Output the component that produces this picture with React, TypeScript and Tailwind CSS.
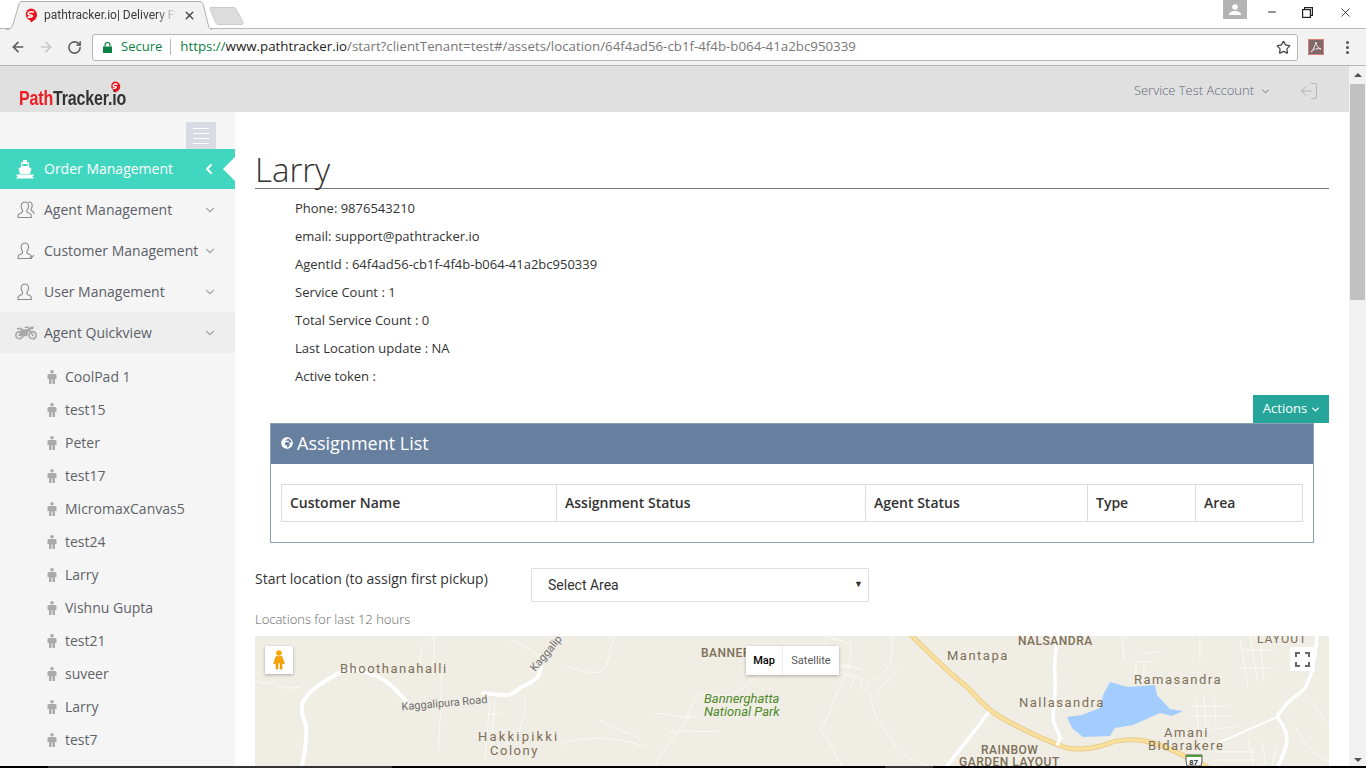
import { ChevronDown, ChevronLeft, ArrowLeft, ArrowRight, RotateCw, Star, X, Minus, LogOut } from "lucide-react";
import { FaMotorcycle, FaGlobeAfrica } from "react-icons/fa";

const agents = ["CoolPad 1", "test15", "Peter", "test17", "MicromaxCanvas5", "test24", "Larry", "Vishnu Gupta", "test21", "suveer", "Larry", "test7"];

const infoRows = [
  "Phone: 9876543210",
  "email: support@pathtracker.io",
  "AgentId : 64f4ad56-cb1f-4f4b-b064-41a2bc950339",
  "Service Count : 1",
  "Total Service Count : 0",
  "Last Location update : NA",
  "Active token :",
];

const columns = [
  { name: "Customer Name", width: "w-[274px]" },
  { name: "Assignment Status", width: "w-[309px]" },
  { name: "Agent Status", width: "w-[222px]" },
  { name: "Type", width: "w-[108px]" },
  { name: "Area", width: "w-[107px]" },
];

function LogoMark({ size }: { size: number }) {
  return (
    <svg width={size} height={size} viewBox="0 0 16 16">
      <path d="M8 0.5a7 7 0 0 1 5 11.8L8.5 15.5 7.5 13A6.5 6.5 0 0 1 8 .5z" fill="#e8141c" />
      <path d="M11.5 4.5C9 3.5 5 4 5.5 6.5 6 8 9.5 6.800 10 8.200 10.300 9.500 7.500 10 5 9.500" fill="none" stroke="#fff" strokeWidth="1.700" />
    </svg>
  );
}

function UserIcon({ variant }: { variant: "group" | "check" | "single" }) {
  return (
    <svg width="18" height="18" viewBox="0 0 18 18" fill="none" stroke="#8b8b8b" strokeWidth="1.100">
      <path d="M6 1.500c3-1.500 6 .5 5.500 4-.2 1.500-1 3-1.500 3.700-.3.800 0 2 1 2.500 1.500.6 2.500 1 3 1.800.3.600.3 2 .3 3H1c0-1 0-2.500.5-3 .7-.8 2-1.200 3-1.800 1-.5 1.200-1.700 1-2.500C5 8.500 4.300 7 4.200 5.500 4 4 4.600 2.200 6 1.500z" />
      {variant === "group" && <path d="M11 1c3-.5 5 2 4 5-.3 1-1 2-1.200 2.800 0 .8 1 1.200 2 1.700 .8.400 1.200 1.200 1.200 2.500" />}
      {variant === "check" && <path d="M13 14.500l1.500 1.500 2.500-3" />}
    </svg>
  );
}

function PersonIcon() {
  return (
    <svg className="ml-[1px] mr-[8px] shrink-0" width="10" height="14" viewBox="0 0 10 14" fill="#aaaaaa">
      <circle cx="5" cy="1.800" r="1.800" />
      <path d="M2 4h6c1 0 1.500.6 1.500 1.500V9H8v5H5.500V9.500h-1V14H2V9H.5V5.500C.5 4.600 1 4 2 4z" />
    </svg>
  );
}

function MenuItem({ label, icon, shaded }: { label: string; icon: React.ReactNode; shaded?: boolean }) {
  return (
    <div className={`flex h-[41px] items-center pl-[17px] pr-[18px] ${shaded ? "bg-[#eeeeee]" : ""}`}>
      <span className="flex w-[27px] shrink-0">{icon}</span>
      <span className="whitespace-nowrap text-[14px] text-[#5b6068]">{label}</span>
      <ChevronDown className="ml-auto shrink-0 text-[#a4a7aa]" size={14} />
    </div>
  );
}

function Sidebar() {
  return (
    <aside className="w-[235px] shrink-0 bg-[#f5f5f5]">
      <div className="flex h-[37px] justify-end pr-[19px] pt-[10px]">
        <div className="flex h-[27px] w-[30px] flex-col items-center justify-center gap-[4px] bg-[#d8dce2]">
          <span className="h-px w-[16px] bg-white" />
          <span className="h-px w-[16px] bg-white" />
          <span className="h-px w-[16px] bg-white" />
          <span className="h-px w-[16px] bg-white" />
        </div>
      </div>
      <div className="relative flex h-[40px] items-center bg-[#40d6c0] pb-[1px] pl-[16px] pr-[18px] text-white">
        <svg className="mr-[10px] shrink-0" width="18" height="20" viewBox="0 0 18 20" fill="#fff">
          <path d="M7 1h4v2.500h2V8l2.500 1.500L14 15H4L2.500 9.500 5 8V3.500h2z" />
          <rect x="6.300" y="5" width="5.400" height="2" fill="#40d6c0" />
          <path d="M0.500 15.500h17V17h-1v1h1v1.500h-17V18h1v-1h-1z" />
        </svg>
        <span className="text-[14px]">Order Management</span>
        <ChevronLeft className="ml-auto" size={16} strokeWidth={3} />
        <span className="absolute right-0 top-[8px] h-0 w-0 border-y-[12px] border-r-[12px] border-y-transparent border-r-white" />
      </div>
      <MenuItem label="Agent Management" icon={<UserIcon variant="group" />} />
      <MenuItem label="Customer Management" icon={<UserIcon variant="check" />} />
      <MenuItem label="User Management" icon={<UserIcon variant="single" />} />
      <MenuItem label="Agent Quickview" icon={<FaMotorcycle className="-ml-[2px] text-[#a8a8a8]" size={22} />} shaded />
      <ul className="pt-[7px]">
        {agents.map((name, i) => (
          <li key={i} className="flex h-[33px] items-center pl-[46px] text-[14px] text-[#5f6369]">
            <PersonIcon />
            {name}
          </li>
        ))}
      </ul>
    </aside>
  );
}

function MapCanvas() {
  const label = "font-['Roboto',sans-serif] fill-[#7d6f58] text-[13px] tracking-[1.500px]";
  const caps = "font-['Roboto',sans-serif] fill-[#7d6f58] text-[12px] font-medium tracking-[.5px]";
  const roadName = "font-['Roboto',sans-serif] fill-[#6f6f6f] text-[11px]";
  const thin = { fill: "none", stroke: "#fbfaf6", strokeWidth: 1 };
  return (
    <div className="relative h-[130px] overflow-hidden bg-[#f0ede5]">
      <svg className="block" width="1074" height="130" viewBox="255 636 1074 130">
        <g {...thin}>
          <path d="M255 681c8 2 12 4 18 0 8 8 14 8 28 6" />
          <path d="M434 636c-5 6-14 8-14 26" />
          <path d="M434 636v30M441 670c2 30-3 60-2 80" />
          <path d="M510 640c15 6 26 12 32 20M615 637c-8 15-5 30-13 34-8 4-20 0-38-5" />
          <path d="M524 695c4 15-4 30-8 50M490 700l-5 60M495 700l-4 45M488 714h12" />
          <path d="M560 745c20-10 60-8 85 2M600 720c20 14 30 10 40 20" />
          <path d="M654 768c8-18 22-30 32-48 5-12 8-22 14-26 14-2 30 8 45-8 6-6 14-6 16-14" />
          <path d="M652 715c14-6 30 8 46 0M668 733c14-4 32 0 52-2" />
          <path d="M850 672c-8 0-22 50-30 58 10 12 16 26 22 36" />
          <path d="M826 636l25 8-2 24-24-6zM838 672l22 6M842 664l20 6M855 676l-4 12M863 678l-3 12M870 680l-4 12" />
          <path d="M875 680c14-10 20-20 16-44M898 670c-8 12-15 12-20 22" />
          <path d="M870 690c2 30 16 38 25 56 8 12 26 16 34 20" />
          <path d="M1122 636l2 24M1200 636v24M1140 654l20-2M1138 662h16M1136 675v-14M1144 675v-14" />
          <path d="M1196 700l2 28M1204 696l2 30M1214 694l2 30M1192 706h36M1190 716h40M1240 640l8 46M1240 668h34M1244 650h30M1250 636l8 46M1260 640l4 40" />
          <path d="M1210 730l30-4M1215 752h40M1220 760h35M1248 740l6 26M1262 742l4 24M1276 746l-4 20" />
          <path d="M1310 700c8 8 12 20 19 24M1295 726c10 20 20 28 34 36" />
        </g>
        <path d="M1110 682l18 5 27-2 2 10 13 14 13 2-11 5-12-3-27 12-18 3-5 8-27 1-11-9-5-11 15-2 18-7 3-13z" fill="#a3ccff" />
        <g fill="none" strokeLinecap="round" strokeLinejoin="round">
          <path d="M912 636c12 12 38 38 55 51 10 10 20 23 33 30 18 10 40 22 67 31 18 3 36-2 43-5 8-3 24-5 40-1 10 2 40 16 57 25" stroke="#e3c987" strokeWidth="5" />
          <path d="M912 636c12 12 38 38 55 51 10 10 20 23 33 30 18 10 40 22 67 31 18 3 36-2 43-5 8-3 24-5 40-1 10 2 40 16 57 25" stroke="#fadf9d" strokeWidth="3.500" />
          <path d="M302 766c3-14 5-30 4-40-3-10-6-16-3-24 6-12 20-20 38-30 12-4 28 0 43 8 12 7 20 20 28 28M483 693c8 1 18 2 24 2 6 0 9-4 14-8 8-3 14-6 17-11 2-3 3-6 3-8" stroke="#fff" strokeWidth="4" />
          <path d="M988 713c-10 14-28 36-41 53M1058 638c-3 14-4 28-3 40 1 14-2 28-2 42 2 8 7 14 7 18l-2 6M1317 636c-1 14-3 28-7 41-3 8-6 14-10 16-10 6-18 16-23 24 6 8 10 14 10 22 0 10-5 18-9 27" stroke="#fff" strokeWidth="3.500" />
          <path d="M1277 717c-18 8-40 18-57 25" stroke="#fff" strokeWidth="2" />
        </g>
        <text x="340" y="673" className={label}>Bhoothanahalli</text>
        <text x="401" y="707" transform="rotate(-5 441 700)" className={roadName} stroke="#f0ede5" strokeWidth="2" paintOrder="stroke">Kaggalipura Road</text>
        <text x="535" y="672" transform="rotate(-50 535 672)" className={roadName} stroke="#f0ede5" strokeWidth="2" paintOrder="stroke">Kaggalip</text>
        <text x="478" y="741" className="font-['Roboto',sans-serif] fill-[#7d6f58] text-[13px] tracking-[2.200px]">Hakkipikki</text>
        <text x="490" y="755" className={label}>Colony</text>
        <text x="701" y="657" className={caps}>BANNER</text>
        <text x="704" y="703" className="font-['Roboto',sans-serif] fill-[#4f8a2a] text-[13px] italic">Bannerghatta</text>
        <text x="704" y="716" className="font-['Roboto',sans-serif] fill-[#4f8a2a] text-[13px] italic">National Park</text>
        <text x="947" y="660" className={label}>Mantapa</text>
        <text x="1018" y="645" className={caps}>NALSANDRA</text>
        <text x="1134" y="684" className={label}>Ramasandra</text>
        <text x="1019" y="707" className={label}>Nallasandra</text>
        <text x="1164" y="737" className={label}>Amani</text>
        <text x="1148" y="750" className={label}>Bidarakere</text>
        <text x="981" y="754" className={caps}>RAINBOW</text>
        <text x="959" y="766" className={caps}>GARDEN LAYOUT</text>
        <text x="1257" y="643" className="font-['Roboto',sans-serif] fill-[#7d6f58] text-[12px] tracking-[1px]">LAYOUT</text>
        <path d="M1186 755h16v6l-1 5h-14l-1-5z" fill="#fff" stroke="#555" />
        <path d="M1186 755h16v2h-16z" fill="#4f9a3a" />
        <text x="1189" y="765" className="font-['Roboto',sans-serif] fill-[#333] text-[8px] font-bold">87</text>
      </svg>
      {/* map controls */}
      <div className="absolute left-[10px] top-[10px] flex h-[28px] w-[28px] items-center justify-center bg-white shadow-[0_1px_3px_rgba(0,0,0,.3)]">
        <svg width="12" height="20" viewBox="0 0 12 20">
          <circle cx="6" cy="3" r="2.800" fill="#f6a800" />
          <path d="M3 6.500h6l2.500 7-1.500.5L9 11.500V19H7v-6H5v6H3v-7.500L2 14l-1.500-.5z" fill="#f6a800" stroke="#d68900" strokeWidth=".5" />
        </svg>
      </div>
      <div className="absolute left-[491px] top-[10px] flex h-[29px] items-center bg-white font-['Roboto',sans-serif] text-[11px] shadow-[0_1px_3px_rgba(0,0,0,.3)]">
        <span className="flex h-full w-[37px] items-center justify-center border-r border-[#eeeeee] pt-[1px] font-medium text-black">Map</span>
        <span className="flex h-full w-[56px] items-center justify-center pt-[1px] text-[#565656]">Satellite</span>
      </div>
      <div className="absolute left-[1035px] top-[11px] flex h-[24px] w-[25px] items-center justify-center bg-white">
        <svg width="15" height="15" viewBox="0 0 15 15" fill="none" stroke="#666" strokeWidth="2">
          <path d="M1 5V1h4M10 1h4v4M14 10v4h-4M5 14H1v-4" />
        </svg>
      </div>
    </div>
  );
}

function Content() {
  return (
    <main className="min-w-0 flex-1 bg-white pl-[20px] pr-[20px] pt-[38px]">
      <h1 className="h-[39px] border-b border-[#777777] text-[33px] font-light leading-[39px] text-[#333333]">Larry</h1>
      <div className="pb-[4px] pl-[40px] pt-[6px] text-[13px] text-[#333333]">
        {infoRows.map((row) => (
          <div key={row} className="flex h-[28px] items-center">{row}</div>
        ))}
      </div>
      <div className="flex justify-end">
        <button className="flex h-[28px] w-[76px] items-center justify-center gap-[3px] bg-[#26a69a] pl-[2px] text-[13px] text-white">
          Actions
          <ChevronDown size={11} strokeWidth={3} />
        </button>
      </div>
      <section className="ml-[15px] mr-[15px] h-[120px] border border-[#8aa0b3] px-[10px]">
        <div className="-mx-[10px] flex h-[40px] items-center gap-[4px] bg-[#67809f] pb-[2px] pl-[10px] text-[18px] text-white">
          <FaGlobeAfrica size={12} />
          Assignment List
        </div>
        <div className="mt-[20px] flex h-[38px] border border-[#dddddd] pb-[2px] text-[14px] font-semibold text-[#333333]">
          {columns.map((col, i) => (
            <div key={col.name} className={`-mb-[2px] flex items-center px-[8px] pb-[2px] ${col.width} ${i > 0 ? "border-l border-[#dddddd]" : ""}`}>
              {col.name}
            </div>
          ))}
        </div>
      </section>
      <div className="flex pt-[25px]">
        <label className="w-[276px] pt-[1px] text-[14px] leading-[20px] text-[#333333]">Start location (to assign first pickup)</label>
        <div className="flex h-[34px] w-[338px] items-center justify-between border border-[#e0e0e0] pl-[16px] pr-[5px] font-['Roboto',sans-serif] text-[14px] text-[#333333]">
          Select Area
          <span className="text-[9px] text-[#333333]">▼</span>
        </div>
      </div>
      <p className="flex h-[34px] items-center pt-[2px] text-[13px] font-light text-[#666666]">Locations for last 12 hours</p>
      <MapCanvas />
    </main>
  );
}

function BrowserChrome() {
  return (
    <header className="shrink-0 font-['Open_Sans',sans-serif]">
      <div className="relative flex h-[29px] items-end border-b border-[#b8b8b8] bg-white pl-[6px]">
        <div className="relative -mb-px flex h-[28px] w-[205px] items-center pl-[17px]">
          <svg className="absolute left-0 top-0" width="206" height="29" viewBox="0 0 206 29">
            <path d="M0 28.500h1c3 0 5-2 6-5L13 3c.6-1.500 1.500-2.500 3-2.500h178c1.500 0 2.400 1 3 2.500l5 20c.8 3 2 5.500 4 5.500" fill="#f2f2f2" stroke="#b0b0b0" />
          </svg>
          <span className="relative mr-[6px] flex"><LogoMark size={15} /></span>
          <span className="relative w-[132px] overflow-hidden whitespace-nowrap font-['Roboto',sans-serif] text-[12px] text-[#3b3b3b] [mask-image:linear-gradient(90deg,#000_85%,transparent)]">pathtracker.io| Delivery P</span>
          <X className="relative ml-[7px] text-[#444444]" size={13} strokeWidth={2.500} />
        </div>
        <svg className="-mb-px -ml-[2px] mt-[6px] self-start" width="36" height="20" viewBox="0 0 36 20">
          <path d="M1 1.500h24c1 0 1.500.5 2 1.500l7 13c.6 1.200 0 2.500-1.500 2.500H9c-1 0-1.500-.5-2-1.500L1 3c-.4-.8 0-1.500 0-1.500z" fill="#dcdcdc" stroke="#cccccc" />
        </svg>
        <div className="absolute right-[119px] top-0 flex h-[19px] w-[24px] items-center justify-center bg-[#b3b3b3]">
          <svg width="12" height="11" viewBox="0 0 12 11" fill="#fff"><circle cx="6" cy="3" r="2.800" /><path d="M0 11c0-3 3-4 6-4s6 1 6 4z" /></svg>
        </div>
        <div className="absolute right-0 top-0 flex h-[24px] items-center text-[#222222]">
          <Minus className="mr-[24px]" size={12} />
          <svg className="mr-[25px]" width="11" height="11" viewBox="0 0 11 11" fill="none" stroke="#222" strokeWidth="1.200">
            <rect x=".6" y="2.600" width="7.800" height="7.800" /><path d="M2.600 2.600V.6h7.800v7.800H8.400" />
          </svg>
          <X className="mr-[13px]" size={15} strokeWidth={1.300} />
        </div>
      </div>
      <div className="flex h-[37px] items-center border-b border-[#b8b8b8] bg-[#f2f2f2] pl-[10px]">
        <ArrowLeft className="text-[#5c5c5c]" size={16} strokeWidth={2.500} />
        <ArrowRight className="ml-[12px] text-[#c8c8c8]" size={16} strokeWidth={2.500} />
        <RotateCw className="ml-[13px] text-[#5c5c5c]" size={15} strokeWidth={2.500} />
        <div className="ml-[10px] flex h-[27px] w-[1206px] items-center rounded-[3px] border border-[#b5b5b5] bg-white pl-[10px] pr-[6px] text-[13px]">
          <svg width="9" height="11" viewBox="0 0 9 11" fill="#0b8043">
            <path d="M0 4.500h9V11H0z" />
            <path d="M2 4.500V3a2.500 2.500 0 0 1 5 0v1.500" fill="none" stroke="#0b8043" strokeWidth="1.200" />
          </svg>
          <span className="ml-[9px] text-[#0b8043]">Secure</span>
          <span className="ml-[8px] mr-[9px] h-[16px] w-px bg-[#b8b8b8]" />
          <span className="text-[13.300px] text-[#0b8043]">https://</span>
          <span className="text-[13.300px] text-[#222222]">www.pathtracker.io</span>
          <span className="text-[13.300px] text-[#777777]">/start?clientTenant=test#/assets/location/64f4ad56-cb1f-4f4b-b064-41a2bc950339</span>
          <Star className="ml-auto text-[#444444]" size={15} strokeWidth={2} />
        </div>
        <div className="ml-[10px] flex h-[16px] w-[16px] items-center justify-center border border-[#d97f76] bg-[#7f6868]">
          <svg width="12" height="12" viewBox="0 0 12 12" fill="none" stroke="#f4e8e8" strokeWidth="1">
            <path d="M6 1c-.8 3-2 7-5 10M6 1c.5 4 2 6 5 7M1 11c3-3 6-4 10-3" />
          </svg>
        </div>
        <div className="ml-[22px] flex flex-col gap-[2px]">
          <span className="h-[3px] w-[3px] rounded-full bg-[#555555]" />
          <span className="h-[3px] w-[3px] rounded-full bg-[#555555]" />
          <span className="h-[3px] w-[3px] rounded-full bg-[#555555]" />
        </div>
      </div>
    </header>
  );
}

function ScrollBar() {
  return (
    <div className="flex w-[17px] shrink-0 flex-col items-center bg-[#f1f1f1]">
      <span className="mt-[7px] h-0 w-0 border-x-[4px] border-b-[4px] border-x-transparent border-b-[#505050]" />
      <span className="mt-[7px] h-[216px] w-[15px] bg-[#c1c1c1]" />
      <span className="mb-[4px] mt-auto h-0 w-0 border-x-[4px] border-t-[4px] border-x-transparent border-t-[#505050]" />
    </div>
  );
}

export default function App() {
  return (
    <div className="flex h-[768px] w-[1366px] flex-col overflow-hidden bg-white font-['Open_Sans',sans-serif]">
      <BrowserChrome />
      <div className="flex min-h-0 flex-1">
        <div className="flex min-w-0 flex-1 flex-col">
          <div className="flex h-[46px] shrink-0 items-center justify-between bg-[#e0e0e0] pl-[19px] pr-[30px]">
            <div className="relative mt-[18px] flex w-[108px]">
              <div className="flex origin-left scale-x-[.8] whitespace-nowrap font-['Liberation_Sans',sans-serif] text-[20px] font-bold leading-[20px] tracking-[-.2px]">
                <span className="text-[#ed1c24]">Path</span>
                <span className="text-[#333333]">Tracker.io</span>
              </div>
              <span className="absolute -top-[7px] right-[6px]"><LogoMark size={12} /></span>
            </div>
            <div className="mt-[4px] flex items-center text-[13px] font-light text-[#5f6b77]">
              Service Test Account
              <ChevronDown className="ml-[6px]" size={11} strokeWidth={2} />
              <LogOut className="ml-[28px] rotate-180 text-[#b4b4b4]" size={20} strokeWidth={1.200} />
            </div>
          </div>
          <div className="flex min-h-0 flex-1 overflow-hidden">
            <Sidebar />
            <Content />
          </div>
        </div>
        <ScrollBar />
      </div>
      <div className="flex h-[2px] shrink-0 bg-black">
        <span className="ml-[48px] w-[344px] bg-[#333333]" />
        <span className="ml-[493px] w-[48px] bg-[#333333]" />
      </div>
    </div>
  );
}
